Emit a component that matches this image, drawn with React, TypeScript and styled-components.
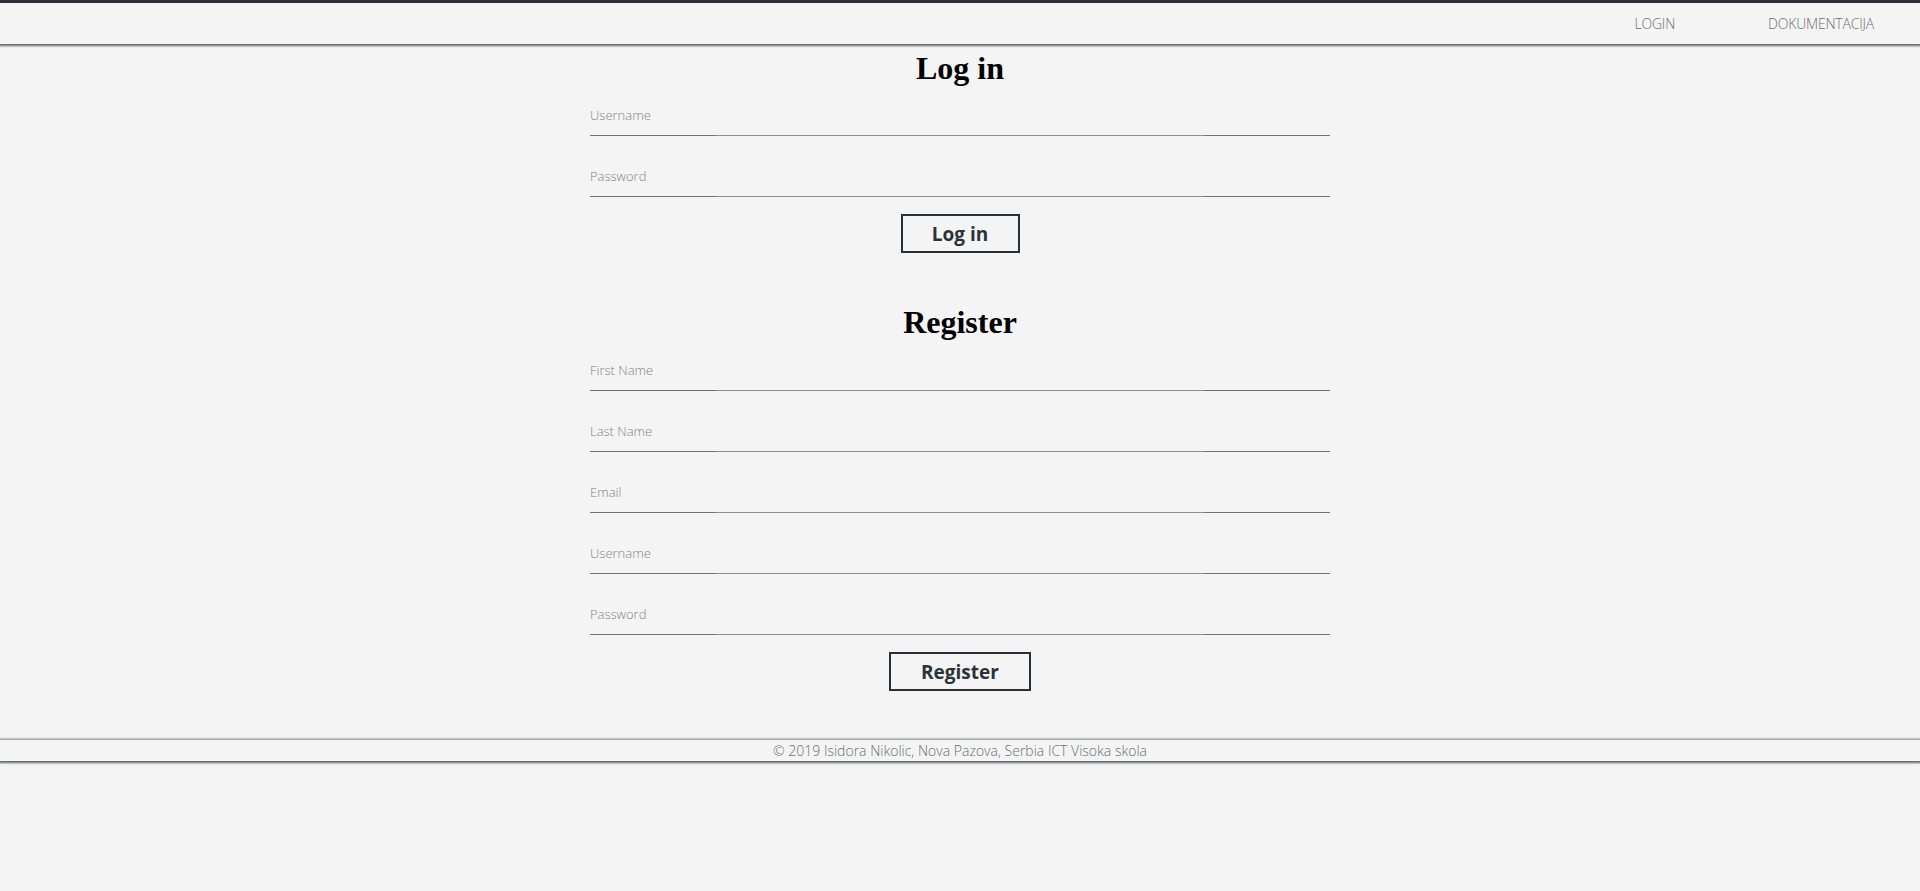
import React from "react";
import styled, { createGlobalStyle } from "styled-components";

const Global = createGlobalStyle`
  html, body { margin: 0; padding: 0; background: #f4f4f4; }
  body { font-family: "Open Sans", "Liberation Sans", sans-serif; }
  * { box-sizing: border-box; }
`;

const Page = styled.div`
  min-height: 891px;
  background: #f4f4f4;
  display: flex;
  flex-direction: column;
`;

const Header = styled.header`
  height: 44px;
  border-top: 3px solid #2b3139;
  background: #f4f4f5;
  box-shadow: 0 1px 2px 1px #5f6666;
  display: flex;
  align-items: center;
  justify-content: flex-end;
  padding-right: 46px;
  position: relative;
  z-index: 1;
`;

const Nav = styled.nav`
  display: flex;
  gap: 93px;
  margin-top: -1px;
`;

const NavLink = styled.a`
  font-family: "Open Sans", "Liberation Sans", sans-serif;
  font-weight: 300;
  font-size: 14px;
  letter-spacing: -0.2px;
  color: #6e6e6e;
  text-decoration: none;
`;

const Main = styled.main`
  width: 740px;
  margin: 0 auto;
  display: flex;
  flex-direction: column;
  align-items: stretch;
`;

const Title = styled.h1<{ $top: number }>`
  margin: ${(p) => p.$top}px 0 0;
  font-family: "Liberation Serif", "Times New Roman", serif;
  font-weight: 700;
  font-size: 32px;
  line-height: 37px;
  text-align: center;
  color: #000;
`;

const Form = styled.form<{ $top: number }>`
  display: flex;
  flex-direction: column;
  gap: 25px;
  margin-top: ${(p) => p.$top}px;
`;

const FieldWrap = styled.div`
  height: 36px;
`;

const Input = styled.input`
  display: block;
  width: 100%;
  height: 35px;
  border: none;
  outline: none;
  background: transparent;
  padding: 0 0 5px;
  font-family: "Open Sans", "Liberation Sans", sans-serif;
  font-weight: 300;
  font-size: 13px;
  color: #333;
  &::placeholder {
    color: #828282;
    opacity: 1;
  }
`;

const Underline = styled.div`
  height: 1px;
  background: linear-gradient(
    to right,
    #6f7078 0%,
    #6f7078 17%,
    #8c8ca2 17%,
    #8c8ca2 83%,
    #6f7078 83%,
    #6f7078 100%
  );
`;

const ButtonRow = styled.div`
  display: flex;
  justify-content: center;
  margin-top: -8px;
`;

const Button = styled.button<{ $w: number }>`
  width: ${(p) => p.$w}px;
  height: 39px;
  border: 2px solid #2b3035;
  background: transparent;
  font-family: "Open Sans", "Liberation Sans", sans-serif;
  font-weight: 700;
  font-size: 19px;
  color: #2b3338;
  padding: 0;
  cursor: pointer;
`;

const Footer = styled.footer`
  margin-top: 48px;
  height: 22px;
  border-top: 1px solid #a9a9a9;
  background: #f4f4f5;
  box-shadow: 0 1px 2px 1px #5f6666;
  display: flex;
  align-items: center;
  justify-content: center;
  font-family: "Open Sans", "Liberation Sans", sans-serif;
  font-weight: 300;
  font-size: 14px;
  color: #6e6e6e;
`;

const Field = ({ placeholder, type = "text" }: { placeholder: string; type?: string }) => (
  <FieldWrap>
    <Input type={type} placeholder={placeholder} />
    <Underline />
  </FieldWrap>
);

export default function App() {
  return (
    <Page>
      <Global />
      <Header>
        <Nav>
          <NavLink href="#">LOGIN</NavLink>
          <NavLink href="#">DOKUMENTACIJA</NavLink>
        </Nav>
      </Header>
      <Main>
        <Title $top={6}>Log in</Title>
        <Form $top={13} onSubmit={(e) => e.preventDefault()}>
          <Field placeholder="Username" />
          <Field placeholder="Password" type="password" />
          <ButtonRow>
            <Button $w={119} type="submit">Log in</Button>
          </ButtonRow>
        </Form>
        <Title $top={51}>Register</Title>
        <Form $top={14} onSubmit={(e) => e.preventDefault()}>
          <Field placeholder="First Name" />
          <Field placeholder="Last Name" />
          <Field placeholder="Email" />
          <Field placeholder="Username" />
          <Field placeholder="Password" type="password" />
          <ButtonRow>
            <Button $w={142} type="submit">Register</Button>
          </ButtonRow>
        </Form>
      </Main>
      <Footer>© 2019 Isidora Nikolic, Nova Pazova, Serbia ICT Visoka skola</Footer>
    </Page>
  );
}
